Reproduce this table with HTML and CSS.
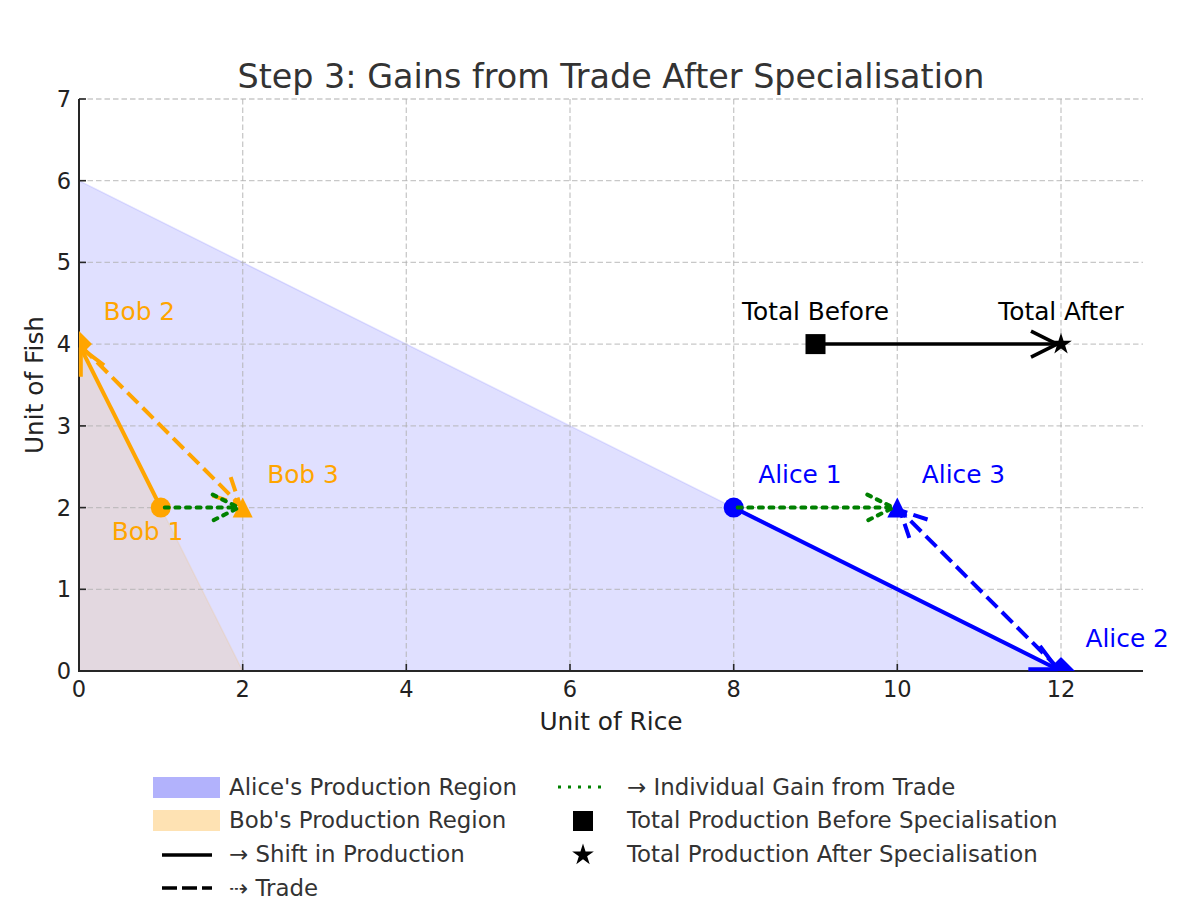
FILE: index.html
```html
<!DOCTYPE html>
<html>
<head>
<meta charset="utf-8">
<link rel="stylesheet" href="styles.css">
</head>
<body>
<div class="figure">
<svg class="chart" width="1200" height="770" viewBox="0 0 1200 770" xmlns="http://www.w3.org/2000/svg">
  <defs>
    <clipPath id="axclip"><rect x="79" y="99" width="1064" height="572"/></clipPath>
    <marker id="h-or" markerUnits="userSpaceOnUse" orient="auto" overflow="visible" markerWidth="1" markerHeight="1">
      <path class="head" d="M-26,-13 L0,0 L-26,13" stroke="#ffa500"/>
    </marker>
    <marker id="h-or-d" markerUnits="userSpaceOnUse" orient="auto" overflow="visible" markerWidth="1" markerHeight="1">
      <path class="head dashed" d="M-26,-13 L0,0 L-26,13" stroke="#ffa500"/>
    </marker>
    <marker id="h-bl" markerUnits="userSpaceOnUse" orient="auto" overflow="visible" markerWidth="1" markerHeight="1">
      <path class="head" d="M-26,-13 L0,0 L-26,13" stroke="#0000ff"/>
    </marker>
    <marker id="h-bl-d" markerUnits="userSpaceOnUse" orient="auto" overflow="visible" markerWidth="1" markerHeight="1">
      <path class="head dashed" d="M-26,-13 L0,0 L-26,13" stroke="#0000ff"/>
    </marker>
    <marker id="h-g" markerUnits="userSpaceOnUse" orient="auto" overflow="visible" markerWidth="1" markerHeight="1">
      <path class="head dotted" d="M-26,-13 L0,0 L-26,13" stroke="#008000"/>
    </marker>
    <marker id="h-k" markerUnits="userSpaceOnUse" orient="auto" overflow="visible" markerWidth="1" markerHeight="1">
      <path class="head headk" d="M-26,-13 L0,0 L-26,13" stroke="#000"/>
    </marker>
  </defs>

  <text class="title" x="611" y="88">Step 3: Gains from Trade After Specialisation</text>

  <g clip-path="url(#axclip)">
    <polygon class="alice-fill" points="79,180.7 1061,671 79,671"/>
    <polygon class="bob-fill" points="79,344.1 242.7,671 79,671"/>
  </g>

  <g class="grid">
    <line x1="242.7" y1="99" x2="242.7" y2="671"/>
    <line x1="406.3" y1="99" x2="406.3" y2="671"/>
    <line x1="570" y1="99" x2="570" y2="671"/>
    <line x1="733.7" y1="99" x2="733.7" y2="671"/>
    <line x1="897.3" y1="99" x2="897.3" y2="671"/>
    <line x1="1061" y1="99" x2="1061" y2="671"/>
    <line x1="79" y1="589.3" x2="1143" y2="589.3"/>
    <line x1="79" y1="507.6" x2="1143" y2="507.6"/>
    <line x1="79" y1="425.9" x2="1143" y2="425.9"/>
    <line x1="79" y1="344.1" x2="1143" y2="344.1"/>
    <line x1="79" y1="262.4" x2="1143" y2="262.4"/>
    <line x1="79" y1="180.7" x2="1143" y2="180.7"/>
    <line x1="79" y1="99" x2="1143" y2="99"/>
  </g>

  <g class="ticks">
    <line x1="79" y1="671" x2="79" y2="664"/>
    <line x1="242.7" y1="671" x2="242.7" y2="664"/>
    <line x1="406.3" y1="671" x2="406.3" y2="664"/>
    <line x1="570" y1="671" x2="570" y2="664"/>
    <line x1="733.7" y1="671" x2="733.7" y2="664"/>
    <line x1="897.3" y1="671" x2="897.3" y2="664"/>
    <line x1="1061" y1="671" x2="1061" y2="664"/>
    <line x1="79" y1="671" x2="86" y2="671"/>
    <line x1="79" y1="589.3" x2="86" y2="589.3"/>
    <line x1="79" y1="507.6" x2="86" y2="507.6"/>
    <line x1="79" y1="425.9" x2="86" y2="425.9"/>
    <line x1="79" y1="344.1" x2="86" y2="344.1"/>
    <line x1="79" y1="262.4" x2="86" y2="262.4"/>
    <line x1="79" y1="180.7" x2="86" y2="180.7"/>
    <line x1="79" y1="99" x2="86" y2="99"/>
  </g>

  <g class="spines">
    <line x1="79" y1="99" x2="79" y2="672"/>
    <line x1="78" y1="671" x2="1143" y2="671"/>
  </g>

  <g class="xticklabels">
    <text x="79" y="697">0</text>
    <text x="242.7" y="697">2</text>
    <text x="406.3" y="697">4</text>
    <text x="570" y="697">6</text>
    <text x="733.7" y="697">8</text>
    <text x="897.3" y="697">10</text>
    <text x="1061" y="697">12</text>
  </g>
  <g class="yticklabels">
    <text x="71" y="679">0</text>
    <text x="71" y="597.3">1</text>
    <text x="71" y="515.6">2</text>
    <text x="71" y="433.9">3</text>
    <text x="71" y="352.1">4</text>
    <text x="71" y="270.4">5</text>
    <text x="71" y="188.7">6</text>
    <text x="71" y="107">7</text>
  </g>

  <text class="axlabel" x="611" y="730">Unit of Rice</text>
  <text class="axlabel" transform="translate(43,385) rotate(-90)">Unit of Fish</text>

  <g clip-path="url(#axclip)">
    <circle cx="160.8" cy="507.6" r="10" fill="#ffa500"/>
    <polygon points="79,331.1 92,344.1 79,357.1 66,344.1" fill="#ffa500"/>
    <polygon points="242.7,497.6 252.7,517.6 232.7,517.6" fill="#ffa500"/>
    <circle cx="733.7" cy="507.6" r="10" fill="#0000ff"/>
    <polygon points="1061,657 1075,671 1061,685 1047,671" fill="#0000ff"/>
    <polygon points="897.3,497.6 907.3,517.6 887.3,517.6" fill="#0000ff"/>
    <rect x="805.5" y="334.1" width="20" height="20" fill="#000"/>
  </g>

  <g class="arrows">
    <path class="arr solid" d="M159,504 L80.8,347.8" stroke="#ffa500" marker-end="url(#h-or)"/>
    <path class="arr dashed" d="M81.8,347 L239.9,504.8" stroke="#ffa500" marker-end="url(#h-or-d)"/>
    <path class="arr dotted" d="M164.8,507.6 L238.7,507.6" stroke="#008000" marker-end="url(#h-g)"/>
    <path class="arr solid" d="M737.3,509.4 L1057.4,669.2" stroke="#0000ff" marker-end="url(#h-bl)"/>
    <path class="arr dashed" d="M1058.2,668.2 L900.1,510.4" stroke="#0000ff" marker-end="url(#h-bl-d)"/>
    <path class="arr dotted" d="M737.7,507.6 L893.3,507.6" stroke="#008000" marker-end="url(#h-g)"/>
    <path class="arr solidk" d="M819.5,344.1 L1057,344.1" stroke="#000" marker-end="url(#h-k)"/>
  </g>

  <path d="M1061,332.8 L1063.56,340.68 L1071.84,340.68 L1065.14,345.55 L1067.7,353.42 L1061,348.55 L1054.3,353.42 L1056.86,345.55 L1050.16,340.68 L1058.44,340.68 Z" fill="#000"/>

  <g class="annot">
    <text class="bob" x="103.5" y="319.6">Bob 2</text>
    <text class="bob" x="111.7" y="540.3">Bob 1</text>
    <text class="bob" x="267.2" y="483">Bob 3</text>
    <text class="alice" x="758.2" y="483">Alice 1</text>
    <text class="alice" x="921.8" y="483">Alice 3</text>
    <text class="alice" x="1085.5" y="646.5">Alice 2</text>
    <text class="total" x="815.5" y="319.6">Total Before</text>
    <text class="total" x="1061" y="319.6">Total After</text>
  </g>
</svg>

<div class="legend">
  <div class="item">
    <span class="handle wide"><span class="patch patch-alice"></span></span>
    <span class="label">Alice's Production Region</span>
  </div>
  <div class="item">
    <span class="handle wide"><span class="patch patch-bob"></span></span>
    <span class="label">Bob's Production Region</span>
  </div>
  <div class="item">
    <span class="handle wide"><svg width="50" height="6" viewBox="0 0 50 6"><line x1="0" y1="3" x2="50" y2="3" class="lg-solid"/></svg></span>
    <span class="label">→ Shift in Production</span>
  </div>
  <div class="item">
    <span class="handle wide"><svg width="50" height="6" viewBox="0 0 50 6"><line x1="0" y1="3" x2="50" y2="3" class="lg-dashed"/></svg></span>
    <span class="label">⇢ Trade</span>
  </div>
  <div class="item">
    <span class="handle narrow"><svg width="50" height="6" viewBox="0 0 50 6"><line x1="0" y1="3" x2="50" y2="3" class="lg-dotted"/></svg></span>
    <span class="label label2">→ Individual Gain from Trade</span>
  </div>
  <div class="item">
    <span class="handle narrow"><span class="sq"></span></span>
    <span class="label label2">Total Production Before Specialisation</span>
  </div>
  <div class="item">
    <span class="handle narrow"><svg width="24" height="24" viewBox="-12 -12 24 24"><path d="M0,-11.4 L2.56,-3.52 L10.84,-3.52 L4.14,1.35 L6.7,9.22 L0,4.35 L-6.7,9.22 L-4.14,1.35 L-10.84,-3.52 L-2.56,-3.52 Z" fill="#000"/></svg></span>
    <span class="label label2">Total Production After Specialisation</span>
  </div>
</div>
</div>
</body>
</html>
```

FILE: styles.css
```css
html, body {
  margin: 0;
  padding: 0;
  background: #ffffff;
}

body {
  font-family: "DejaVu Sans", "Liberation Sans", sans-serif;
}

.figure {
  width: 1200px;
  height: 900px;
  overflow: hidden;
}

.chart {
  display: block;
  font-family: "DejaVu Sans", sans-serif;
}

.title {
  font-size: 33.4px;
  fill: #333333;
  text-anchor: middle;
}

.alice-fill {
  fill: rgba(0, 0, 255, 0.12);
  stroke: rgba(0, 0, 255, 0.1);
  stroke-width: 1.5;
}

.bob-fill {
  fill: rgba(255, 165, 0, 0.12);
  stroke: rgba(255, 165, 0, 0.1);
  stroke-width: 1.5;
}

.grid line {
  stroke: #b0b0b0;
  stroke-opacity: 0.7;
  stroke-width: 1.3;
  stroke-dasharray: 5.5 3;
}

.ticks line {
  stroke: #262626;
  stroke-width: 1.6;
}

.spines line {
  stroke: #262626;
  stroke-width: 2;
}

.xticklabels text {
  font-size: 22.5px;
  fill: #222222;
  text-anchor: middle;
}

.yticklabels text {
  font-size: 22.5px;
  fill: #222222;
  text-anchor: end;
}

.axlabel {
  font-size: 24.8px;
  fill: #222222;
  text-anchor: middle;
}

.arr {
  fill: none;
  stroke-width: 4;
}

.arr.dashed {
  stroke-dasharray: 15 6.5;
}

.arr.dotted {
  stroke-dasharray: 4 6.6;
  stroke-linecap: round;
}

.arr.solidk {
  stroke-width: 3.5;
}

.head {
  fill: none;
  stroke-width: 4;
  stroke-linejoin: round;
}

.head.dashed {
  stroke-dasharray: 15 6.5;
}

.head.dotted {
  stroke-dasharray: 4 6.6;
  stroke-linecap: round;
}

.head.headk {
  stroke-width: 3.5;
}

.annot text {
  font-size: 24.8px;
}

.annot .bob {
  fill: #ffa500;
}

.annot .alice {
  fill: #0000ff;
}

.annot .total {
  fill: #000000;
  text-anchor: middle;
}

.legend {
  display: grid;
  grid-template-columns: 405px auto;
  grid-template-rows: repeat(4, 23px);
  row-gap: 10.8px;
  grid-auto-flow: column;
  margin-left: 153px;
  margin-top: 5.5px;
}

.item {
  display: flex;
  align-items: center;
  height: 23px;
}

.handle {
  display: flex;
  align-items: center;
  justify-content: center;
  height: 23px;
  flex: none;
}

.handle svg {
  display: block;
}

.handle.wide {
  width: 67px;
}

.handle.narrow {
  width: 50px;
}

.patch {
  display: block;
  width: 67px;
  height: 21px;
}

.patch-alice {
  background: #b2b2fc;
}

.patch-bob {
  background: #fee2b3;
}

.sq {
  display: block;
  width: 20px;
  height: 20px;
  background: #000;
}

.lg-solid {
  stroke: #000;
  stroke-width: 3.3;
}

.lg-dashed {
  stroke: #000;
  stroke-width: 3.3;
  stroke-dasharray: 15 5;
}

.lg-dotted {
  stroke: #008000;
  stroke-width: 3;
  stroke-dasharray: 3 7;
}

.label {
  font-size: 22.9px;
  color: #333333;
  margin-left: 9px;
  white-space: nowrap;
  line-height: 23px;
}

.label2 {
  margin-left: 19px;
}
```
